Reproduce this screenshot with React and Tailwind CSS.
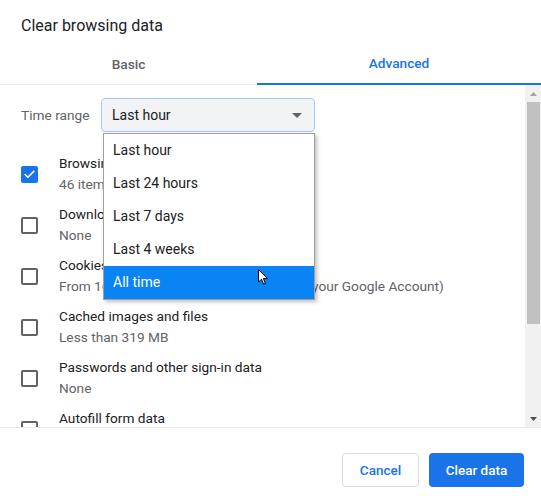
import { Check } from "lucide-react";

const items = [
  { title: "Browsing history", sub: "46 items", checked: true },
  { title: "Download history", sub: "None" },
  { title: "Cookies and other site data", sub: "From 16 sites (you won't be signed out of your Google Account)" },
  { title: "Cached images and files", sub: "Less than 319 MB" },
  { title: "Passwords and other sign-in data", sub: "None" },
  { title: "Autofill form data", sub: "None" },
];

const options = ["Last hour", "Last 24 hours", "Last 7 days", "Last 4 weeks", "All time"];

function Checkbox({ checked }) {
  if (checked) {
    return (
      <div className="w-[17px] h-[17px] rounded-[2px] bg-[#1a73e8] flex items-center justify-center shrink-0">
        <Check className="w-[13px] h-[13px] text-white" strokeWidth={3} />
      </div>
    );
  }
  return <div className="w-[17px] h-[17px] rounded-[2px] border-2 border-[#5f6368] shrink-0" />;
}

function Cursor() {
  return (
    <svg width="11" height="17" viewBox="0 0 11 17" className="absolute left-[258px] top-[269px]">
      <path d="M0.5 0.5 L0.5 13 L3.5 10.2 L5.6 15.2 L7.4 14.4 L5.4 9.6 L9.5 9.6 Z" fill="white" stroke="black" strokeWidth="1" strokeLinejoin="round" />
    </svg>
  );
}

export default function App() {
  return (
    <div
      className="relative w-[541px] h-[496px] bg-white overflow-hidden flex flex-col text-[#202124]"
      style={{ fontFamily: "Roboto, 'Liberation Sans', Arial, sans-serif" }}
    >
      {/* title */}
      <div className="h-[44px] pl-[21px] pt-[15px] text-[16px] leading-[22px]">Clear browsing data</div>

      {/* tabs */}
      <div className="h-[41px] flex border-b border-[#e8eaed] text-[13.7px] font-medium">
        <div className="w-[257px] flex items-center justify-center text-[#5f6368]">Basic</div>
        <div className="flex-1 flex items-center justify-center text-[#1a73e8] border-b-2 border-[#1a73e8] -mb-px">Advanced</div>
      </div>

      {/* scroll body */}
      <div className="flex-1 flex min-h-0 border-b border-[#e8eaed]">
        <div className="flex-1 overflow-hidden pt-[13px]">
          <div className="flex items-center h-[34px] pl-[21px]">
            <span className="w-[80px] text-[13.7px] text-[#5f6368]">Time range</span>
            <div className="w-[214px] h-[34px] rounded-[4px] border border-[#a8c7fa] bg-[#f1f3f4] flex items-center justify-between pl-[10px] pr-[12px] text-[14px]">
              <span>Last hour</span>
              <svg width="10" height="5" viewBox="0 0 10 5">
                <path d="M0 0 L10 0 L5 5 Z" fill="#5f6368" />
              </svg>
            </div>
          </div>
          <div className="h-[17px]" />
          {items.map((it) => (
            <div key={it.title} className="h-[51px] flex items-center pl-[21px]">
              <Checkbox checked={it.checked} />
              <div className="ml-[21px] text-[13.7px] leading-[21px] -mt-[1px]">
                <div className="whitespace-nowrap">{it.title}</div>
                <div className="whitespace-nowrap text-[#5f6368]">{it.sub}</div>
              </div>
            </div>
          ))}
        </div>
        <div className="w-[16px] bg-[#f1f1f1] flex flex-col items-center">
          <div className="h-[17px] flex items-center justify-center">
            <svg width="7" height="4" viewBox="0 0 7 4">
              <path d="M0 4 L7 4 L3.5 0 Z" fill="#a3a3a3" />
            </svg>
          </div>
          <div className="w-[13px] h-[222px] bg-[#c1c1c1]" />
          <div className="flex-1" />
          <div className="h-[17px] flex items-center justify-center">
            <svg width="7" height="4" viewBox="0 0 7 4">
              <path d="M0 0 L7 0 L3.5 4 Z" fill="#505050" />
            </svg>
          </div>
        </div>
      </div>

      {/* footer */}
      <div className="h-[68px] flex items-start justify-end gap-[10px] pt-[25px] pr-[17px] text-[13.5px] font-medium">
        <button className="w-[77px] h-[34px] rounded-[4px] border border-[#dadce0] bg-white text-[#1a73e8]">Cancel</button>
        <button className="w-[95px] h-[34px] rounded-[4px] bg-[#1a73e8] text-white">Clear data</button>
      </div>

      {/* open dropdown list */}
      <div className="absolute left-[103px] top-[133px] w-[212px] bg-white border border-[#a0a0a0] shadow-[2px_2px_4px_rgba(0,0,0,0.25)] text-[14px]">
        {options.map((o) => (
          <div
            key={o}
            className={
              o === "All time"
                ? "h-[33px] flex items-center pl-[9px] bg-[#0a84f5] text-white"
                : "h-[33px] flex items-center pl-[9px] text-[#202124]"
            }
          >
            {o}
          </div>
        ))}
      </div>
      <Cursor />
    </div>
  );
}
